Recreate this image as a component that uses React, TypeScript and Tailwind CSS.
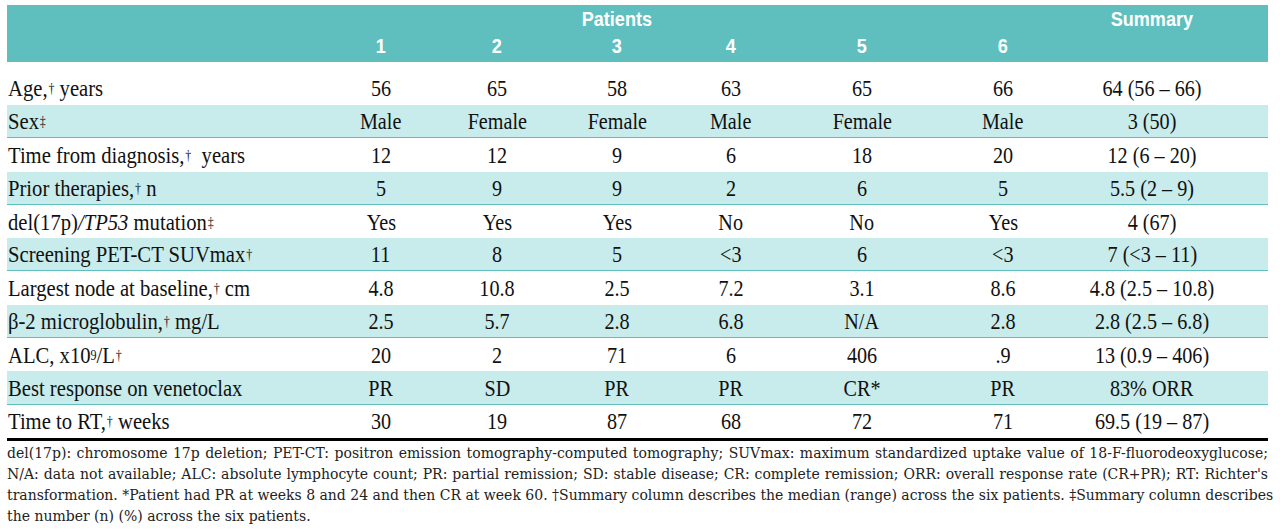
import React from "react";

const serif = { fontFamily: '"Liberation Serif", "Times New Roman", serif' };

const Dag = () => <sup className="text-[14px] relative -top-[3px] ml-[1px]">†</sup>;
const DDag = () => <sup className="text-[14px] relative -top-[3px] ml-[1px]">‡</sup>;

type Row = { label: React.ReactNode; vals: string[] };

const rows: Row[] = [
  { label: <>Age,<Dag /> years</>, vals: ["56", "65", "58", "63", "65", "66", "64 (56 – 66)"] },
  { label: <>Sex<DDag /></>, vals: ["Male", "Female", "Female", "Male", "Female", "Male", "3 (50)"] },
  { label: <>Time from diagnosis,<Dag />&nbsp; years</>, vals: ["12", "12", "9", "6", "18", "20", "12 (6 – 20)"] },
  { label: <>Prior therapies,<Dag /> n</>, vals: ["5", "9", "9", "2", "6", "5", "5.5 (2 – 9)"] },
  { label: <>del(17p)<i>/TP53</i> mutation<DDag /></>, vals: ["Yes", "Yes", "Yes", "No", "No", "Yes", "4 (67)"] },
  { label: <>Screening PET-CT SUVmax<Dag /></>, vals: ["11", "8", "5", "<3", "6", "<3", "7 (<3 – 11)"] },
  { label: <>Largest node at baseline,<Dag /> cm</>, vals: ["4.8", "10.8", "2.5", "7.2", "3.1", "8.6", "4.8 (2.5 – 10.8)"] },
  { label: <>β-2 microglobulin,<Dag /> mg/L</>, vals: ["2.5", "5.7", "2.8", "6.8", "N/A", "2.8", "2.8 (2.5 – 6.8)"] },
  { label: <>ALC, x10<sup className="text-[14px] relative -top-[3px]">9</sup>/L<Dag /></>, vals: ["20", "2", "71", "6", "406", ".9", "13 (0.9 – 406)"] },
  { label: <>Best response on venetoclax</>, vals: ["PR", "SD", "PR", "PR", "CR*", "PR", "83% ORR"] },
  { label: <>Time to RT,<Dag /> weeks</>, vals: ["30", "19", "87", "68", "72", "71", "69.5 (19 – 87)"] },
];

const cols = "grid grid-cols-[317px_114px_118px_122px_106px_156px_126px_172px_30px]";

const H = ({ children }: { children: React.ReactNode }) => (
  <div className="text-center">
    <span className="inline-block scale-x-[0.86]">{children}</span>
  </div>
);

export default function App() {
  return (
    <div className="w-[1280px] h-[531px] bg-white overflow-hidden pt-[5px] pl-[7px]">
      <div className="w-[1261px]">
        {/* header */}
        <div
          className="bg-[#5fbfbf] text-white font-bold h-[57px]"
          style={{ fontFamily: '"Liberation Sans", Arial, sans-serif' }}
        >
          <div className={`${cols} h-[27px] items-center text-[21px] leading-none`}>
            <div />
            <div />
            <div />
            <H>Patients</H>
            <div />
            <div />
            <div />
            <H>Summary</H>
            <div />
          </div>
          <div className={`${cols} h-[27px] items-center text-[21px] leading-none`}>
            <div />
            {["1", "2", "3", "4", "5", "6"].map((n) => (
              <H key={n}>{n}</H>
            ))}
            <div />
            <div />
          </div>
        </div>
        {/* body */}
        <div style={serif} className="text-[24px] text-[#111] leading-none">
          {rows.map((r, i) => {
            const shaded = i % 2 === 1;
            const first = i === 0;
            return (
              <div
                key={i}
                className={`${cols} items-center ${first ? "h-[43px] pt-[9px]" : "h-[33.3px]"} ${
                  shaded ? "bg-[#c8ebeb] border-b border-[#5fbfbf]" : ""
                }`}
              >
                <div className="pl-[1px] whitespace-nowrap">
                  <span className="inline-block scale-x-[0.86] origin-left">{r.label}</span>
                </div>
                {r.vals.map((v, j) => (
                  <div key={j} className="text-center whitespace-nowrap">
                    <span className="inline-block scale-x-[0.84]">{v}</span>
                  </div>
                ))}
                <div />
              </div>
            );
          })}
          <div className="h-[3px] bg-black" />
        </div>
        {/* footer */}
        <div
          className="pt-[2px] text-[14px] leading-[21px] text-[#222]"
          style={{ fontFamily: '"DejaVu Serif", "Liberation Serif", serif' }}
        >
          <div className="text-justify [text-align-last:justify] whitespace-nowrap">
            del(17p): chromosome 17p deletion; PET-CT: positron emission tomography-computed tomography; SUVmax: maximum standardized uptake value of 18-F-fluorodeoxyglucose;
          </div>
          <div className="text-justify [text-align-last:justify] whitespace-nowrap">
            N/A: data not available; ALC: absolute lymphocyte count; PR: partial remission; SD: stable disease; CR: complete remission; ORR: overall response rate (CR+PR); RT: Richter's
          </div>
          <div className="text-justify [text-align-last:justify] whitespace-nowrap">
            transformation. *Patient had PR at weeks 8 and 24 and then CR at week 60. †Summary column describes the median (range) across the six patients. ‡Summary column describes
          </div>
          <div className="whitespace-nowrap">the number (n) (%) across the six patients.</div>
        </div>
      </div>
    </div>
  );
}
